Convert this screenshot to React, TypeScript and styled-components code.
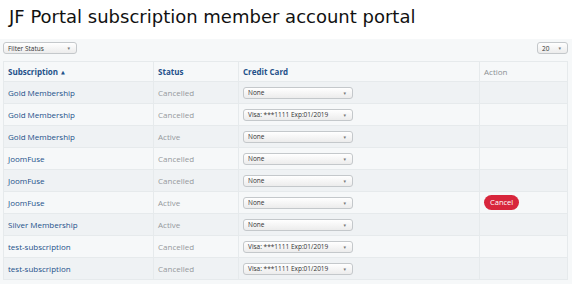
import styled, { createGlobalStyle } from "styled-components";

const GlobalStyle = createGlobalStyle`
  body {
    margin: 0;
    background: #ffffff;
    font-family: "Open Sans", "DejaVu Sans", sans-serif;
  }
`;

const Title = styled.h1`
  margin: 0;
  padding: 6px 0 0 9px;
  height: 33px;
  font-family: "DejaVu Sans", sans-serif;
  font-weight: normal;
  font-size: 18px;
  color: #111;
`;

const Panel = styled.div`
  background: #f6f8f9;
  padding: 3px 4px 4px 3px;
  width: 565px;
`;

const Toolbar = styled.div`
  display: flex;
  justify-content: space-between;
  align-items: center;
  height: 12px;
  margin-bottom: 7px;
`;

const Select = styled.div<{ $w: number }>`
  box-sizing: border-box;
  width: ${(p) => p.$w}px;
  height: 12px;
  border: 1px solid #c4c8cb;
  border-radius: 3px;
  background: linear-gradient(#ffffff, #ececec);
  display: flex;
  align-items: center;
  justify-content: space-between;
  padding: 0 6px 0 4px;
  font-size: 6.5px;
  color: #333;
  &::after {
    content: "▾";
    font-size: 5px;
    color: #777;
  }
`;

const Table = styled.table`
  width: 564px;
  border-collapse: collapse;
  border: 1px solid #e6eaec;
  table-layout: fixed;
`;

const Th = styled.th<{ $muted?: boolean }>`
  height: 19px;
  padding: 0 4px;
  text-align: left;
  font-size: 8px;
  font-weight: ${(p) => (p.$muted ? 400 : 700)};
  color: ${(p) => (p.$muted ? "#8a8f93" : "#24518a")};
  border-left: 1px solid #e6eaec;
  border-bottom: 1px solid #e6eaec;
`;

const Row = styled.tr<{ $shade: boolean }>`
  background: ${(p) => (p.$shade ? "#eff2f4" : "#f6f8f9")};
`;

const Td = styled.td`
  height: 21px;
  padding: 0 4px;
  font-size: 8px;
  border-left: 1px solid #e6eaec;
  border-bottom: 1px solid #e6eaec;
  vertical-align: middle;
`;

const Link = styled.span`
  color: #24518a;
`;

const Status = styled.span`
  color: #95999d;
`;

const CancelButton = styled.span`
  display: inline-block;
  background: #d8263c;
  color: #fff;
  font-size: 7.5px;
  line-height: 15px;
  padding: 0 6px;
  border-radius: 8px;
`;

const Caret = styled.span`
  font-size: 5px;
  margin-left: 3px;
  vertical-align: 1px;
`;

const rows = [
  { name: "Gold Membership", status: "Cancelled", card: "None" },
  { name: "Gold Membership", status: "Cancelled", card: "Visa: ***1111 Exp:01/2019" },
  { name: "Gold Membership", status: "Active", card: "None" },
  { name: "JoomFuse", status: "Cancelled", card: "None" },
  { name: "JoomFuse", status: "Cancelled", card: "None" },
  { name: "JoomFuse", status: "Active", card: "None", cancel: true },
  { name: "Silver Membership", status: "Active", card: "None" },
  { name: "test-subscription", status: "Cancelled", card: "Visa: ***1111 Exp:01/2019" },
  { name: "test-subscription", status: "Cancelled", card: "Visa: ***1111 Exp:01/2019" },
];

export default function App() {
  return (
    <>
      <GlobalStyle />
      <Title>JF Portal subscription member account portal</Title>
      <Panel>
        <Toolbar>
          <Select $w={74}>Filter Status</Select>
          <Select $w={31}>20</Select>
        </Toolbar>
        <Table>
          <colgroup>
            <col style={{ width: 150 }} />
            <col style={{ width: 85 }} />
            <col style={{ width: 241 }} />
            <col style={{ width: 88 }} />
          </colgroup>
          <thead>
            <tr>
              <Th>
                Subscription<Caret>▲</Caret>
              </Th>
              <Th>Status</Th>
              <Th>Credit Card</Th>
              <Th $muted>Action</Th>
            </tr>
          </thead>
          <tbody>
            {rows.map((r, i) => (
              <Row key={i} $shade={i % 2 === 0}>
                <Td>
                  <Link>{r.name}</Link>
                </Td>
                <Td>
                  <Status>{r.status}</Status>
                </Td>
                <Td>
                  <Select $w={110}>{r.card}</Select>
                </Td>
                <Td>{r.cancel && <CancelButton>Cancel</CancelButton>}</Td>
              </Row>
            ))}
          </tbody>
        </Table>
      </Panel>
    </>
  );
}
